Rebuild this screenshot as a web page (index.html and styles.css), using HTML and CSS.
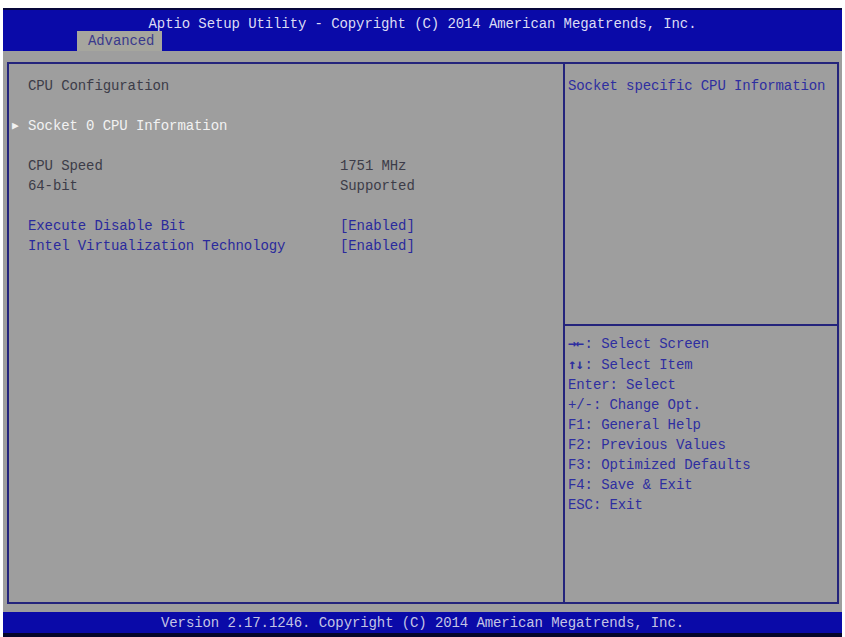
FILE: index.html
```html
<!DOCTYPE html>
<html lang="en">
<head>
    <meta charset="UTF-8">
    <meta name="viewport" content="width=device-width, initial-scale=1.0">
    <title>Aptio Setup Utility</title>
    <link rel="stylesheet" href="styles.css">
</head>
<body>
    <div class="screen">
        <div class="header">
            <div class="title">Aptio Setup Utility - Copyright (C) 2014 American Megatrends, Inc.</div>
            <div class="tabs">
                <span class="tab">Advanced</span>
            </div>
        </div>

        <div class="main">
            <div class="settings">
                <div class="row plain">CPU Configuration</div>
                <div class="row blank"></div>
                <div class="row submenu"><span class="pointer">&#9654;</span>Socket 0 CPU Information</div>
                <div class="row blank"></div>
                <div class="row plain"><span class="label">CPU Speed</span><span class="value">1751 MHz</span></div>
                <div class="row plain"><span class="label">64-bit</span><span class="value">Supported</span></div>
                <div class="row blank"></div>
                <div class="row option"><span class="label">Execute Disable Bit</span><span class="value">[Enabled]</span></div>
                <div class="row option"><span class="label">Intel Virtualization Technology</span><span class="value">[Enabled]</span></div>
            </div>

            <div class="side">
                <div class="help">Socket specific CPU Information</div>
                <div class="keys">
                    <div><span class="arrows">&rarr;&larr;</span>: Select Screen</div>
                    <div><span class="arrows">&uarr;&darr;</span>: Select Item</div>
                    <div>Enter: Select</div>
                    <div>+/-: Change Opt.</div>
                    <div>F1: General Help</div>
                    <div>F2: Previous Values</div>
                    <div>F3: Optimized Defaults</div>
                    <div>F4: Save &amp; Exit</div>
                    <div>ESC: Exit</div>
                </div>
            </div>
        </div>

        <div class="footer">Version 2.17.1246. Copyright (C) 2014 American Megatrends, Inc.</div>
    </div>
</body>
</html>
```

FILE: styles.css
```css
body {
    margin: 0;
    background-color: #fff;
    font-family: "Liberation Mono", "DejaVu Sans Mono", monospace;
    font-size: 14px;
    letter-spacing: -0.1px;
}

.screen {
    display: flex;
    flex-direction: column;
    height: 629px;
    margin: 8px 3px 0 3px;
    background-color: #9e9e9e;
}

/* 上方藍色標題列 */
.header {
    display: flex;
    flex-direction: column;
    height: 41px;
    border-top: 2px solid #06063a;
    background-color: #0a0aa8;
}

.title {
    height: 21px;
    line-height: 28px;
    text-align: center;
    color: #dcdcf4;
}

.tabs {
    display: flex;
    padding-left: 74px;
}

.tab {
    height: 20px;
    padding: 0 8px 0 11px;
    line-height: 21px;
    background-color: #a6a69e;
    color: #3a3a8c;
}

/* 主要區塊 */
.main {
    display: flex;
    height: 538px;
    margin: 11px 3px 0 4px;
    border: 2px solid #24247c;
}

.settings {
    flex: 0 0 535px;
    padding: 12px 0 0 19px;
    border-right: 2px solid #24247c;
}

.row {
    display: flex;
    height: 20px;
    line-height: 20px;
}

.label {
    width: 312px;
}

.plain {
    color: #3c3c48;
}

.option {
    color: #2a2a9c;
}

.submenu {
    position: relative;
    color: #f2f2f2;
}

.pointer {
    position: absolute;
    left: -16px;
    font-size: 11px;
}

.side {
    display: flex;
    flex: 1;
    flex-direction: column;
    color: #2e2ea0;
}

.help {
    height: 248px;
    padding: 12px 0 0 3px;
    border-bottom: 2px solid #24247c;
    line-height: 20px;
}

.keys {
    padding: 7px 0 0 3px;
    line-height: 20px;
}

.arrows {
    display: inline-block;
    width: 16.6px;
    font-family: "DejaVu Sans Mono", monospace;
    font-weight: bold;
    letter-spacing: -1px;
}

/* 下方版本列 */
.footer {
    height: 21px;
    margin-top: 8px;
    border-bottom: 4px solid #05052a;
    background-color: #0a0aa8;
    color: #c4c4e4;
    line-height: 22px;
    text-align: center;
}
```
